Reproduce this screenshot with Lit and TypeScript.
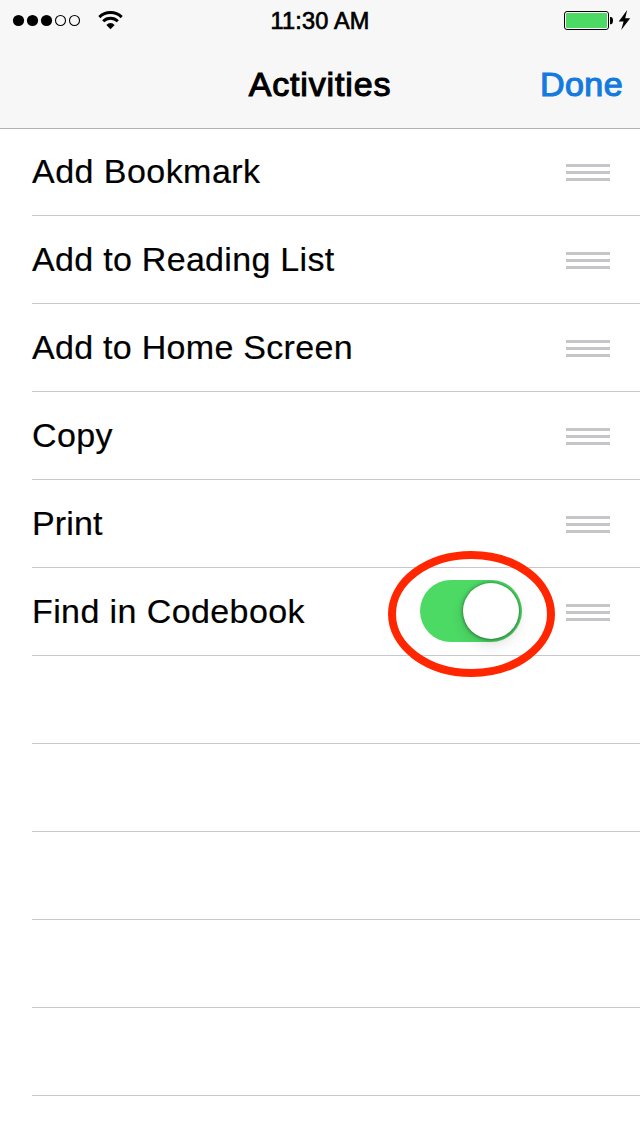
import { LitElement, html, svg, css, nothing } from "lit";
import { customElement, property, state } from "lit/decorators.js";

interface Activity {
  label: string;
  tracking: number;
  toggle?: boolean;
}

@customElement("status-bar")
class StatusBar extends LitElement {
  static styles = css`
    :host {
      display: grid;
      grid-template-columns: 1fr auto 1fr;
      height: 40px;
    }
    svg {
      display: block;
    }
    .time {
      font-size: 23.5px;
      line-height: 40px;
      letter-spacing: 0.2px;
      -webkit-text-stroke: 0.7px #000;
      padding-top: 1px;
      box-sizing: border-box;
    }
    .power {
      justify-self: end;
    }
  `;

  render() {
    return html`
      <svg width="140" height="40" viewBox="0 0 140 40">
        ${[0, 1, 2, 3, 4].map((i) =>
          i < 3
            ? svg`<circle cx=${18.5 + i * 14} cy="20.5" r="5.6"></circle>`
            : svg`<circle cx=${18.5 + i * 14} cy="20.5" r="5" fill="none" stroke="#000" stroke-width="1.1"></circle>`
        )}
        <g fill="none" stroke="#000" stroke-width="3">
          <path d="M99.3 17.1A16.2 16.2 0 0 1 121.7 17.1"></path>
          <path d="M103.2 21.2A10.4 10.4 0 0 1 117.8 21.2"></path>
        </g>
        <path d="M110.5 29.2L106.4 24.9A5.6 5.6 0 0 1 114.6 24.9Z"></path>
      </svg>
      <div class="time">11:30 AM</div>
      <svg class="power" width="90" height="40" viewBox="0 0 90 40">
        <rect x="14.5" y="11.5" width="44" height="18" rx="2.5" fill="#fff" stroke="#000"></rect>
        <rect x="16" y="13" width="41" height="15" rx="1" fill="#4cd964"></rect>
        <path d="M60 17h.8a2.2 3.6 0 0 1 0 7.2H60z"></path>
        <path d="M77.2 10L68.7 21.4h4.9L71.2 30L80.2 18.2h-5z"></path>
      </svg>
    `;
  }
}

@customElement("nav-bar")
class NavBar extends LitElement {
  static styles = css`
    :host {
      display: grid;
      grid-template-columns: 1fr auto 1fr;
      height: 88px;
      font-size: 34px;
      line-height: 88px;
    }
    .title {
      grid-column: 2;
      letter-spacing: 0.85px;
      -webkit-text-stroke: 1.1px #000;
    }
    .done {
      justify-self: end;
      padding-right: 17px;
      color: #157adf;
      letter-spacing: 0.4px;
      -webkit-text-stroke: 1.2px #157adf;
    }
  `;

  render() {
    return html`<div class="title">Activities</div>
      <div class="done">Done</div>`;
  }
}

@customElement("toggle-switch")
class ToggleSwitch extends LitElement {
  @property({ type: Boolean, reflect: true }) on = false;

  static styles = css`
    :host {
      display: flex;
      box-sizing: border-box;
      width: 102px;
      height: 62px;
      padding: 3px;
      border-radius: 31px;
      background: #e5e5e5;
      position: relative;
    }
    :host([on]) {
      justify-content: flex-end;
      background: #4cd964;
    }
    .thumb {
      width: 56px;
      height: 56px;
      border-radius: 50%;
      background: #fff;
      box-shadow: 0 0 4px rgba(0, 0, 0, 0.4), 0 1px 3px rgba(0, 0, 0, 0.2),
        0 6px 14px rgba(0, 0, 0, 0.12);
    }
    .ring {
      position: absolute;
      left: -32px;
      top: -29px;
    }
  `;

  render() {
    return html`<div class="thumb"></div>
      <svg class="ring" width="167" height="126" viewBox="0 0 167 126">
        <ellipse cx="83.5" cy="63" rx="79.5" ry="59" fill="none" stroke="#ff2600" stroke-width="8"></ellipse>
      </svg>`;
  }
}

@customElement("activity-row")
class ActivityRow extends LitElement {
  @property({ attribute: false }) item?: Activity;

  static styles = css`
    :host {
      display: flex;
      align-items: center;
      box-sizing: border-box;
      height: 88px;
      margin-left: 32px;
      padding-right: 30px;
      border-bottom: 1px solid #c8c7cc;
    }
    .label {
      flex: 1;
      font-size: 34px;
      line-height: 87px;
      -webkit-text-stroke: 0.2px #000;
    }
    toggle-switch {
      margin-right: 44px;
      margin-bottom: 1px;
    }
    .handle {
      display: grid;
      gap: 4px;
      width: 44px;
      padding-top: 2px;
    }
    .bar {
      height: 3px;
      background: #c6c6c9;
    }
  `;

  render() {
    if (!this.item) return nothing;
    return html`
      <div class="label" style="letter-spacing: ${this.item.tracking}px">${this.item.label}</div>
      ${this.item.toggle ? html`<toggle-switch on></toggle-switch>` : nothing}
      <div class="handle">
        <div class="bar"></div>
        <div class="bar"></div>
        <div class="bar"></div>
      </div>
    `;
  }
}

@customElement("app-root")
class AppRoot extends LitElement {
  @state() private activities: Activity[] = [
    { label: "Add Bookmark", tracking: 0.46 },
    { label: "Add to Reading List", tracking: 0.3 },
    { label: "Add to Home Screen", tracking: 0.29 },
    { label: "Copy", tracking: 0.4 },
    { label: "Print", tracking: 0.15 },
    { label: "Find in Codebook", tracking: 0.4, toggle: true },
  ];

  static styles = css`
    :host {
      display: block;
      height: 1136px;
      overflow: hidden;
      background: #fff;
      color: #000;
      font-family: "Liberation Sans", Arial, sans-serif;
    }
    .header {
      height: 128px;
      background: #f7f7f7;
      box-shadow: 0 1px 0 #b2b2b2;
    }
  `;

  render() {
    return html`
      <div class="header">
        <status-bar></status-bar>
        <nav-bar></nav-bar>
      </div>
      ${this.activities.map((a) => html`<activity-row .item=${a}></activity-row>`)}
      ${[0, 1, 2, 3, 4].map(() => html`<activity-row></activity-row>`)}
    `;
  }
}
